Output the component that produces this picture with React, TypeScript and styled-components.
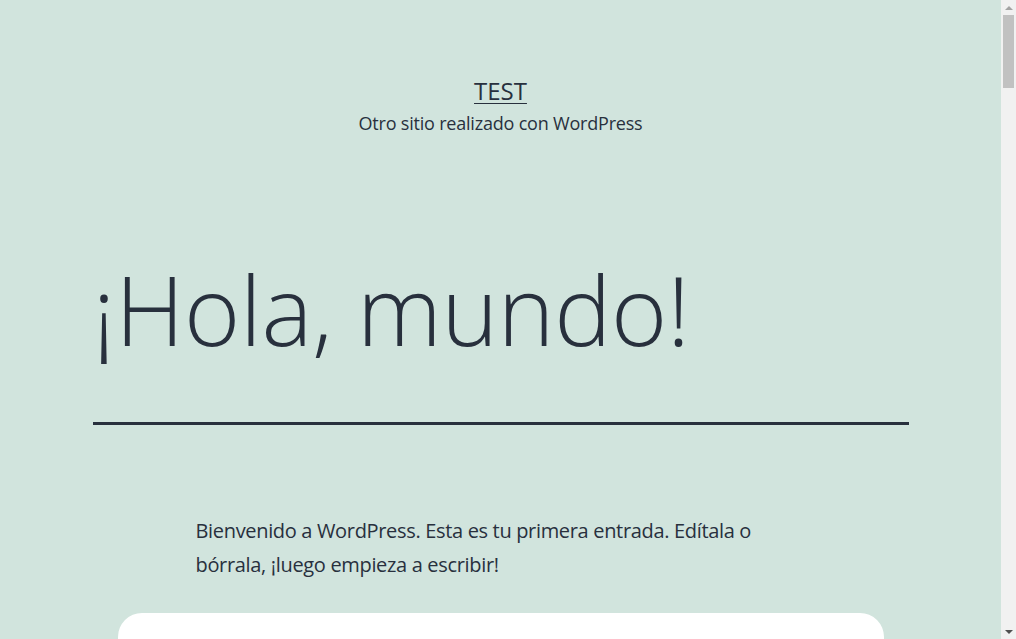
import React from "react";
import styled, { createGlobalStyle } from "styled-components";

const Global = createGlobalStyle`
  html, body { margin: 0; padding: 0; }
  body {
    background: #d1e4dd;
    color: #28303d;
    font-family: "Open Sans", "Noto Sans", sans-serif;
  }
`;

const Page = styled.div`
  display: flex;
  flex-direction: column;
  align-items: center;
  margin-right: 15px;
`;

const Header = styled.header`
  display: flex;
  flex-direction: column;
  align-items: center;
  padding-top: 75px;
`;

const SiteTitle = styled.a`
  font-size: 24px;
  line-height: 1.3;
  color: #28303d;
  text-decoration: underline;
  text-decoration-thickness: 1px;
  text-underline-offset: 3px;
`;

const Tagline = styled.p`
  margin: 5px 0 0;
  font-size: 18px;
  line-height: 1.4;
  letter-spacing: -0.2px;
`;

const Article = styled.article`
  width: 816px;
  margin-top: 120px;
  display: flex;
  flex-direction: column;
  align-items: center;
`;

const EntryHeader = styled.div`
  width: 100%;
  border-bottom: 3px solid #28303d;
  padding-bottom: 60px;
`;

const EntryTitle = styled.h1`
  margin: 0;
  font-size: 96px;
  font-weight: 300;
  line-height: 1.1;
  letter-spacing: -0.3px;
`;

const Content = styled.div`
  width: 610px;
  padding-top: 89px;
`;

const Para = styled.p`
  margin: 0;
  font-size: 20px;
  line-height: 1.7;
  letter-spacing: -0.33px;
`;

const Card = styled.div`
  margin-top: 31px;
  width: 766px;
  height: 400px;
  background: #ffffff;
  border-radius: 24px;
`;

const Scrollbar = styled.aside`
  position: fixed;
  top: 0;
  right: 0;
  bottom: 0;
  width: 15px;
  background: #f1f1f1;
  display: flex;
  flex-direction: column;
  align-items: center;
`;

const Arrow = styled.div<{ $dir: "up" | "down"; $color: string }>`
  height: 15px;
  width: 15px;
  display: flex;
  align-items: center;
  justify-content: center;
  &::before {
    content: "";
    width: 0;
    height: 0;
    border-left: 4px solid transparent;
    border-right: 4px solid transparent;
    ${(p) =>
      p.$dir === "up"
        ? `border-bottom: 4px solid ${p.$color};`
        : `border-top: 4px solid ${p.$color};`}
  }
`;

const Track = styled.div`
  flex: 1;
  width: 100%;
  display: flex;
  justify-content: center;
`;

const Thumb = styled.div`
  width: 11px;
  height: 73px;
  background: #c1c1c1;
`;

export default function App() {
  return (
    <>
      <Global />
      <Page>
        <Header>
          <SiteTitle href="#">TEST</SiteTitle>
          <Tagline>Otro sitio realizado con WordPress</Tagline>
        </Header>
        <Article>
          <EntryHeader>
            <EntryTitle>¡Hola, mundo!</EntryTitle>
          </EntryHeader>
          <Content>
            <Para>
              Bienvenido a WordPress. Esta es tu primera entrada. Edítala o
              bórrala, ¡luego empieza a escribir!
            </Para>
          </Content>
          <Card />
        </Article>
      </Page>
      <Scrollbar>
        <Arrow $dir="up" $color="#a3a3a3" />
        <Track>
          <Thumb />
        </Track>
        <Arrow $dir="down" $color="#505050" />
      </Scrollbar>
    </>
  );
}
